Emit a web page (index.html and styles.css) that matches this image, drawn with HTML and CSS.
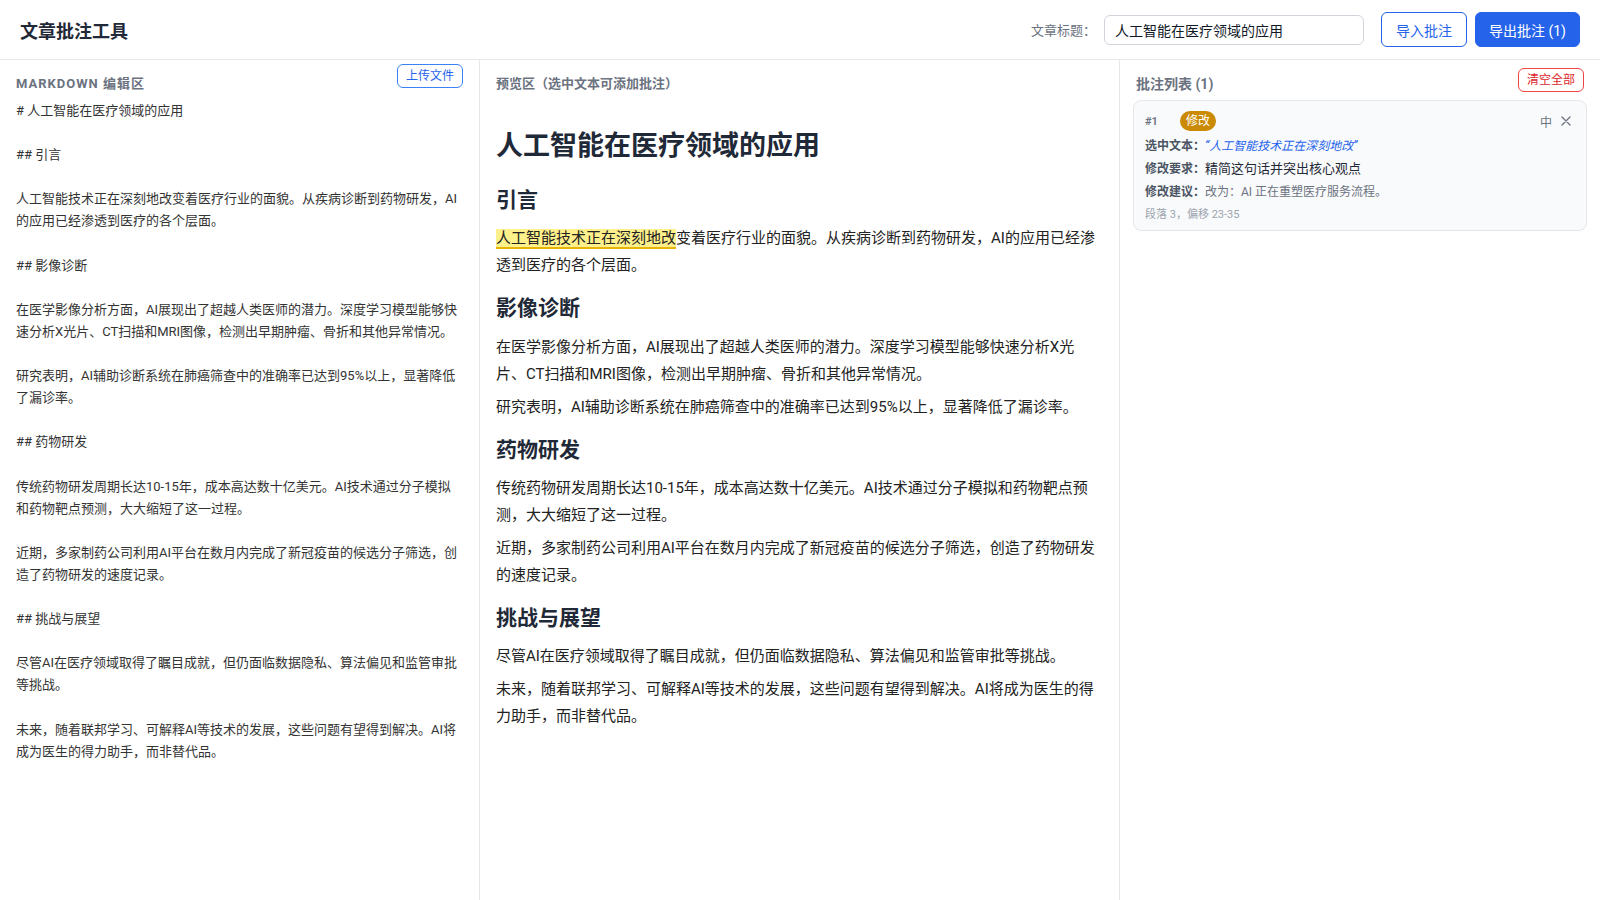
FILE: index.html
```html
<!DOCTYPE html>
<html lang="zh-CN">
<head>
    <meta charset="UTF-8">
    <title>文章批注工具</title>
    <link rel="stylesheet" href="styles.css">
</head>
<body>
    <header class="topbar">
        <h1 class="app-title">文章批注工具</h1>
        <label class="title-field">
            <span class="title-label">文章标题：</span>
            <input class="title-input" type="text" value="人工智能在医疗领域的应用">
        </label>
        <div class="top-actions">
            <button class="btn btn-outline">导入批注</button>
            <button class="btn btn-primary">导出批注 (1)</button>
        </div>
    </header>

    <main class="workspace">
        <section class="panel">
            <div class="panel-head">
                <span class="panel-title caps">Markdown 编辑区</span>
                <button class="small-btn upload-btn">上传文件</button>
            </div>
            <textarea class="editor" spellcheck="false">
# 人工智能在医疗领域的应用

## 引言

人工智能技术正在深刻地改变着医疗行业的面貌。从疾病诊断到药物研发，AI的应用已经渗透到医疗的各个层面。

## 影像诊断

在医学影像分析方面，AI展现出了超越人类医师的潜力。深度学习模型能够快速分析X光片、CT扫描和MRI图像，检测出早期肿瘤、骨折和其他异常情况。

研究表明，AI辅助诊断系统在肺癌筛查中的准确率已达到95%以上，显著降低了漏诊率。

## 药物研发

传统药物研发周期长达10-15年，成本高达数十亿美元。AI技术通过分子模拟和药物靶点预测，大大缩短了这一过程。

近期，多家制药公司利用AI平台在数月内完成了新冠疫苗的候选分子筛选，创造了药物研发的速度记录。

## 挑战与展望

尽管AI在医疗领域取得了瞩目成就，但仍面临数据隐私、算法偏见和监管审批等挑战。

未来，随着联邦学习、可解释AI等技术的发展，这些问题有望得到解决。AI将成为医生的得力助手，而非替代品。</textarea>
        </section>

        <section class="panel">
            <div class="panel-head">
                <span class="panel-title">预览区（选中文本可添加批注）</span>
            </div>
            <article class="preview">
                <h1>人工智能在医疗领域的应用</h1>
                <h2>引言</h2>
                <p><mark class="hl">人工智能技术正在深刻地改</mark>变着医疗行业的面貌。从疾病诊断到药物研发，AI的应用已经渗透到医疗的各个层面。</p>
                <h2>影像诊断</h2>
                <p>在医学影像分析方面，AI展现出了超越人类医师的潜力。深度学习模型能够快速分析X光片、CT扫描和MRI图像，检测出早期肿瘤、骨折和其他异常情况。</p>
                <p>研究表明，AI辅助诊断系统在肺癌筛查中的准确率已达到95%以上，显著降低了漏诊率。</p>
                <h2>药物研发</h2>
                <p>传统药物研发周期长达10-15年，成本高达数十亿美元。AI技术通过分子模拟和药物靶点预测，大大缩短了这一过程。</p>
                <p>近期，多家制药公司利用AI平台在数月内完成了新冠疫苗的候选分子筛选，创造了药物研发的速度记录。</p>
                <h2>挑战与展望</h2>
                <p>尽管AI在医疗领域取得了瞩目成就，但仍面临数据隐私、算法偏见和监管审批等挑战。</p>
                <p>未来，随着联邦学习、可解释AI等技术的发展，这些问题有望得到解决。AI将成为医生的得力助手，而非替代品。</p>
            </article>
        </section>

        <section class="panel">
            <div class="panel-head">
                <span class="panel-title notes-title">批注列表 (1)</span>
                <button class="small-btn clear-btn">清空全部</button>
            </div>
            <div class="notes">
                <div class="note-card">
                    <div class="note-top">
                        <span class="note-index">#1</span>
                        <span class="badge">修改</span>
                        <div class="note-actions">
                            <span>中</span>
                            <svg class="close-icon" width="10" height="10" viewBox="0 0 10 10">
                                <path d="M1 1 L9 9 M9 1 L1 9" stroke="#6b7280" stroke-width="1.3" stroke-linecap="round"/>
                            </svg>
                        </div>
                    </div>
                    <div class="note-row"><span class="k">选中文本：</span><span class="quote">“人工智能技术正在深刻地改”</span></div>
                    <div class="note-row"><span class="k">修改要求：</span><span class="req">精简这句话并突出核心观点</span></div>
                    <div class="note-row"><span class="k">修改建议：</span>改为：AI 正在重塑医疗服务流程。</div>
                    <div class="note-meta">段落 3，偏移 23-35</div>
                </div>
            </div>
        </section>
    </main>
</body>
</html>
```

FILE: styles.css
```css
body {
    margin: 0;
    height: 100vh;
    display: flex;
    flex-direction: column;
    font-family: Roboto, "Noto Sans CJK SC", sans-serif;
    color: #1f2937;
    background-color: #fff;
}
.topbar {
    height: 59px;
    flex-shrink: 0;
    display: flex;
    align-items: center;
    padding: 0 20px;
    border-bottom: 1px solid #e5e7eb;
}
.app-title {
    flex: 1;
    margin: 0;
    font-size: 18px;
    font-weight: 700;
}
.title-field {
    display: flex;
    align-items: center;
    margin-right: 17px;
}
.title-label {
    font-size: 13px;
    color: #6b7280;
    margin-right: 8px;
}
.title-input {
    width: 260px;
    height: 30px;
    box-sizing: border-box;
    padding: 0 10px;
    border: 1px solid #d1d5db;
    border-radius: 6px;
    font-family: inherit;
    font-size: 14px;
    color: #111827;
    outline: none;
}
.top-actions {
    display: flex;
    gap: 8px;
}
.btn {
    height: 35px;
    padding: 0 14px;
    border: 1px solid #2563eb;
    border-radius: 6px;
    font-family: inherit;
    font-size: 14px;
    cursor: pointer;
}
.btn-outline {
    background-color: #fff;
    color: #2563eb;
}
.btn-primary {
    padding: 0 13px;
    background-color: #2563eb;
    color: #fff;
}

.workspace {
    flex: 1;
    min-height: 0;
    display: grid;
    grid-template-columns: 3fr 4fr 3fr;
}
.panel {
    display: flex;
    flex-direction: column;
    min-height: 0;
    border-right: 1px solid #e5e7eb;
}
.panel:last-child {
    border-right: none;
}
.panel-head {
    display: flex;
    justify-content: space-between;
    align-items: flex-start;
    padding: 4px 16px 0;
    margin-bottom: 7px;
}
.panel-title {
    margin-top: 11px;
    font-size: 13px;
    line-height: 18px;
    font-weight: 700;
    color: #6b7280;
}
.panel-title.caps {
    text-transform: uppercase;
    letter-spacing: 1px;
}
.notes-title {
    font-size: 14px;
}
.small-btn {
    height: 24px;
    padding: 0 8px;
    border-radius: 6px;
    background-color: #fff;
    font-family: inherit;
    font-size: 12px;
    line-height: 22px;
    cursor: pointer;
}
.upload-btn {
    border: 1px solid #3b82f6;
    color: #2563eb;
}
.clear-btn {
    margin-top: 4px;
    border: 1px solid #ef4444;
    color: #dc2626;
}

.editor {
    flex: 1;
    box-sizing: border-box;
    margin: 0;
    padding: 0 16px;
    border: none;
    outline: none;
    resize: none;
    background: transparent;
    font-family: inherit;
    font-size: 13px;
    line-height: 22.1px;
    color: #333;
}

.preview {
    flex: 1;
    overflow: auto;
    padding: 0 16px;
}
.preview h1 {
    margin: 28px 0 20px;
    font-size: 27px;
    line-height: 1.4;
    font-weight: 700;
}
.preview h2 {
    margin: 15px 0 10px;
    font-size: 21px;
    line-height: 1.4;
    font-weight: 700;
}
.preview p {
    margin: 6px 0;
    font-size: 15px;
    line-height: 27px;
    color: #222;
}
.hl {
    background-color: #fef08a;
    border-bottom: 2px solid #eab308;
    color: inherit;
}

.notes {
    padding: 0 13px;
}
.note-card {
    padding: 10px 15px 7px 11px;
    border: 1px solid #e5e7eb;
    border-radius: 8px;
    background-color: #f9fafb;
}
.note-top {
    display: flex;
    align-items: center;
    height: 20px;
    margin-bottom: 5px;
}
.note-index {
    width: 35px;
    font-size: 11px;
    font-weight: 600;
    color: #6b7280;
}
.badge {
    height: 20px;
    padding: 0 6px;
    border-radius: 10px;
    background-color: #ca8a04;
    color: #fff;
    font-size: 12px;
    line-height: 20px;
}
.note-actions {
    margin-left: auto;
    display: flex;
    align-items: center;
    gap: 9px;
    font-size: 12px;
    color: #6b7280;
}
.note-row {
    margin-bottom: 3px;
    font-size: 12px;
    line-height: 20px;
    color: #6b7280;
}
.note-row .k {
    font-weight: 700;
    color: #4b5563;
}
.quote {
    font-style: italic;
    color: #2563eb;
}
.req {
    font-size: 13px;
    color: #1f2937;
}
.note-meta {
    padding-top: 2px;
    font-size: 11px;
    line-height: 16px;
    color: #9ca3af;
}
```
